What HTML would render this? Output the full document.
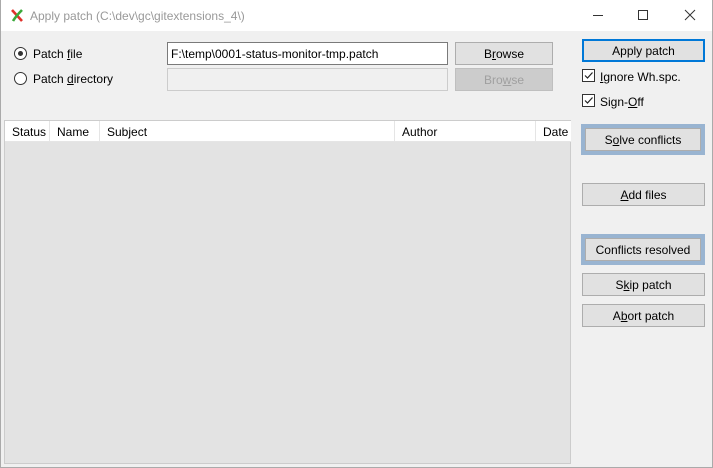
<!DOCTYPE html>
<html><head><style>
*{margin:0;padding:0;box-sizing:border-box}
body{width:713px;height:468px;overflow:hidden;background:#f0f0f0;font-family:"Liberation Sans",sans-serif;font-size:12px;color:#000;position:relative}
.a{position:absolute}
.win{left:0;top:0;width:713px;height:468px;border:1px solid #aaa;border-top:none}
.title{left:0;top:0;width:713px;height:31px;background:#fff}
.btn{position:absolute;background:#e1e1e1;border:1px solid #adadad;text-align:center;line-height:22px;font-size:12px}
.btn.hl{outline:4px solid #99b4d1;}
.btn.dis{color:#a0a0a0;border-color:#bfbfbf;background:#ccc}
u{text-decoration:underline}
.radio{position:absolute;width:13px;height:13px;border:1px solid #333;border-radius:50%;background:#fff}
.chk{position:absolute;width:13px;height:13px;border:1px solid #333;background:#fff}
.th{position:absolute;top:0;height:21px;line-height:22px;border-right:1px solid #e5e5e5;padding-left:7px}
</style></head><body>
<div class="a title"></div>
<svg class="a" style="left:10px;top:8px" width="14" height="15" viewBox="0 0 14 15"><path d="M2 2 L12 13" stroke="#e0302a" stroke-width="2.6"/><path d="M12 2 C9 5 6 8 3 13" stroke="#3aa93a" stroke-width="2.6" fill="none"/></svg>
<div class="a" style="left:30px;top:9px;color:#999;font-size:12px">Apply patch (C:\dev\gc\gitextensions_4\)</div>
<div class="a" style="left:593px;top:15px;width:10px;height:1px;background:#333"></div>
<div class="a" style="left:638px;top:10px;width:10px;height:10px;border:1px solid #333"></div>
<svg class="a" style="left:684px;top:9px" width="12" height="12"><path d="M1 1L11 11M11 1L1 11" stroke="#333" stroke-width="1"/></svg>
<div class="a win"></div>

<div class="radio" style="left:14px;top:47px"><div class="a" style="left:3px;top:3px;width:5px;height:5px;border-radius:50%;background:#333"></div></div>
<div class="a" style="left:33px;top:47px">Patch <u>f</u>ile</div>
<div class="radio" style="left:14px;top:72px"></div>
<div class="a" style="left:33px;top:72px">Patch <u>d</u>irectory</div>

<div class="a" style="left:167px;top:42px;width:281px;height:23px;background:#fff;border:1px solid #7a7a7a;line-height:22px;padding-left:3px">F:\temp\0001-status-monitor-tmp.patch</div>
<div class="a" style="left:167px;top:68px;width:281px;height:23px;background:#f0f0f0;border:1px solid #ccc"></div>
<div class="btn" style="left:455px;top:42px;width:98px;height:23px">B<u>r</u>owse</div>
<div class="btn dis" style="left:455px;top:68px;width:98px;height:23px">Bro<u>w</u>se</div>

<div class="a" style="left:4px;top:120px;width:567px;height:344px;background:#e3e3e3;border:1px solid #ccc"></div>
<div class="a" style="left:5px;top:121px;width:566px;height:21px;background:#fff;border-bottom:1px solid #e5e5e5">
<div class="th" style="left:0;width:45px">Status</div>
<div class="th" style="left:45px;width:50px">Name</div>
<div class="th" style="left:95px;width:295px">Subject</div>
<div class="th" style="left:390px;width:141px">Author</div>
<div class="th" style="left:531px;width:35px;border:none">Date</div>
</div>

<div class="btn" style="left:582px;top:39px;width:123px;height:23px;border:2px solid #0078d7;line-height:20px">Apply patch</div>
<div class="chk" style="left:582px;top:69px"></div><svg class="a" style="left:583px;top:70px" width="11" height="11"><path d="M2 5.5L4.5 8L9.5 2.5" stroke="#222" stroke-width="1.2" fill="none"/></svg>
<div class="a" style="left:600px;top:70px"><u>I</u>gnore Wh.spc.</div>
<div class="chk" style="left:582px;top:94px"></div><svg class="a" style="left:583px;top:95px" width="11" height="11"><path d="M2 5.5L4.5 8L9.5 2.5" stroke="#222" stroke-width="1.2" fill="none"/></svg>
<div class="a" style="left:600px;top:95px">Sign-<u>O</u>ff</div>

<div class="btn hl" style="left:585px;top:128px;width:116px;height:23px;outline-offset:0">S<u>o</u>lve conflicts</div>
<div class="btn" style="left:582px;top:183px;width:123px;height:23px"><u>A</u>dd files</div>
<div class="btn hl" style="left:585px;top:238px;width:116px;height:23px">Conflicts resolved</div>
<div class="btn" style="left:582px;top:273px;width:123px;height:23px">S<u>k</u>ip patch</div>
<div class="btn" style="left:582px;top:304px;width:123px;height:23px">A<u>b</u>ort patch</div>
</body></html>
